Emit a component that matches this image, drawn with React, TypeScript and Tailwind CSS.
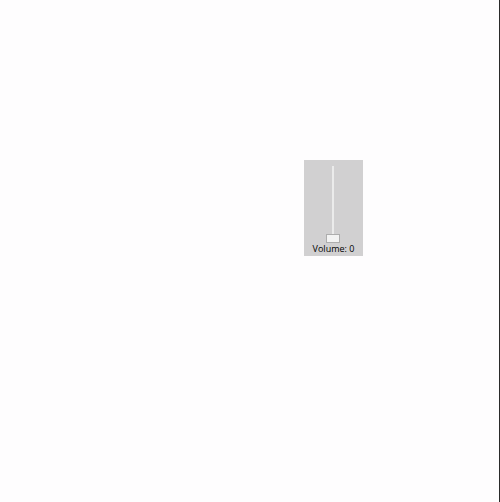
import { useState } from 'react'

export default function App() {
  const [volume, setVolume] = useState(0)

  return (
    <main className="min-h-screen flex items-start border-r border-[#2a2a2a] bg-[#fefdfe] pt-40 pl-76 font-['Open_Sans','Noto_Sans',sans-serif]">
      <div className="flex w-[59px] flex-col items-center bg-[#d1d0d1] pt-[6px] pb-px text-black">
        <input
          id="volume"
          type="range"
          min={0}
          max={100}
          value={volume}
          onChange={(e) => setVolume(Number(e.target.value))}
          className="mr-px h-[77px] w-[14px] appearance-none bg-[linear-gradient(#ebebeb,#ebebeb)] bg-[length:2px_100%] bg-center bg-no-repeat outline-none [direction:rtl] [writing-mode:vertical-lr] [&::-webkit-slider-thumb]:box-border [&::-webkit-slider-thumb]:h-[9px] [&::-webkit-slider-thumb]:w-[14px] [&::-webkit-slider-thumb]:appearance-none [&::-webkit-slider-thumb]:border [&::-webkit-slider-thumb]:border-[#adadad] [&::-webkit-slider-thumb]:bg-[#f3f3f3]"
        />
        <label htmlFor="volume" className="text-[9px] leading-[12px] whitespace-nowrap">
          Volume: {volume}
        </label>
      </div>
    </main>
  )
}
